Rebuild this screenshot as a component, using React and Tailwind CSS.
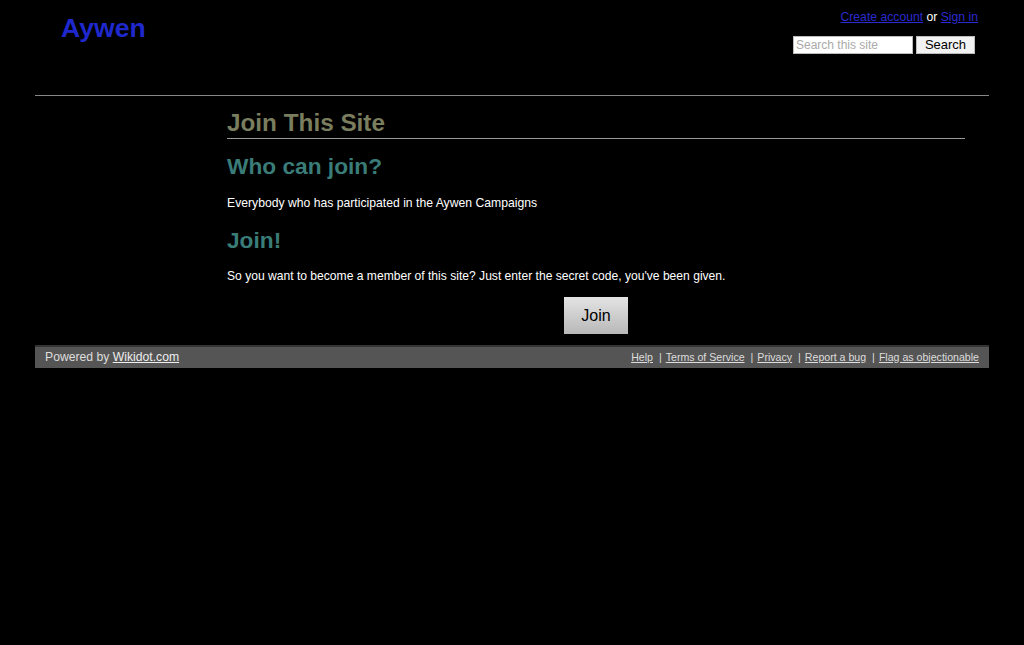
import React from 'react';

const App = () => {
  return (
    <div className="min-h-[645px] bg-black text-white" style={{ fontFamily: '"Liberation Sans", Arial, sans-serif' }}>
      <div className="mx-[35px] w-[954px]">
        {/* Cabeçalho */}
        <header className="relative h-[96px] border-b border-[#888]">
          <h1 className="absolute left-[26px] top-[12px] text-[26.6px] font-bold leading-[32px] text-[#1f28cc]">Aywen</h1>
          <div className="absolute right-[11px] top-[9px] text-[12.2px] leading-[16px]">
            <a href="#" className="text-[#2a2ad0] underline">Create account</a>
            <span className="text-white"> or </span>
            <a href="#" className="text-[#2a2ad0] underline">Sign in</a>
          </div>
          <form className="absolute right-[14px] top-[36px] flex items-center gap-[3px]">
            <input
              type="text"
              placeholder="Search this site"
              className="h-[18px] w-[120px] border border-[#bbb] bg-white px-[2px] text-[12px] text-black placeholder:text-[#aaa]"
            />
            <button type="button" className="h-[18px] w-[59px] border border-[#bbb] bg-[#f2f2f2] text-[13px] leading-[16px] text-black">
              Search
            </button>
          </form>
        </header>

        {/* Conteúdo */}
        <main className="ml-[192px] mr-[24px] pt-[12px] pb-[11px]">
          <h1 className="border-b border-[#999] text-[24.3px] font-bold leading-[30px] text-[#7a7e5e]">Join This Site</h1>
          <h2 className="mt-[13px] text-[22.7px] font-bold leading-[28px] text-[#3a7c78]">Who can join?</h2>
          <p className="mt-[15px] text-[12.2px] leading-[16px]">Everybody who has participated in the Aywen Campaigns</p>
          <h2 className="mt-[15px] text-[22.7px] font-bold leading-[28px] text-[#3a7c78]">Join!</h2>
          <p className="mt-[14px] text-[12.1px] leading-[16px]">So you want to become a member of this site? Just enter the secret code, you've been given.</p>
          <div className="mt-[13px] flex justify-center">
            <button type="button" className="h-[37px] w-[64px] bg-gradient-to-b from-[#e4e4e4] to-[#b8b8b8] text-[16px] text-black">
              Join
            </button>
          </div>
        </main>

        {/* Rodapé */}
        <footer className="flex h-[23px] items-center justify-between border-t-2 border-[#333] bg-[#555] pl-[10px] pr-[10px]">
          <div className="text-[12.2px] text-[#ddd]">
            Powered by <a href="#" className="text-[#eee] underline">Wikidot.com</a>
          </div>
          <div className="flex text-[10.6px] text-[#ddd]">
            <a href="#" className="underline">Help</a>
            <span className="ml-[6px] mr-[4px]">|</span>
            <a href="#" className="underline">Terms of Service</a>
            <span className="ml-[6px] mr-[4px]">|</span>
            <a href="#" className="underline">Privacy</a>
            <span className="ml-[6px] mr-[4px]">|</span>
            <a href="#" className="underline">Report a bug</a>
            <span className="ml-[6px] mr-[4px]">|</span>
            <a href="#" className="underline">Flag as objectionable</a>
          </div>
        </footer>
      </div>
    </div>
  );
};

export default App;
